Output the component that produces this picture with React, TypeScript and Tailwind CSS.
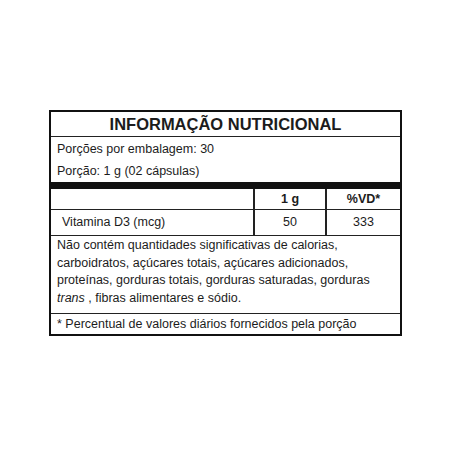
export default function App() {
  return (
    <div className="w-[450px] h-[450px] bg-white pt-[110px] pl-[49px] text-[#1c1c1c]" style={{ fontFamily: '"Liberation Sans", Arial, sans-serif' }}>
      <div className="w-[353px] border-2 border-[#111]">
        {/* Title */}
        <div className="h-[25px] border-b border-[#222] flex items-center justify-center">
          <h1 className="text-[16.5px] font-bold leading-none">INFORMAÇÃO NUTRICIONAL</h1>
        </div>

        {/* Porções */}
        <div className="h-[45px] flex flex-col justify-center pl-[6px] text-[12.5px] leading-[22px]">
          <p>Porções por embalagem: 30</p>
          <p>Porção: 1 g (02 cápsulas)</p>
        </div>

        <div className="h-[7px] bg-[#111]" />

        {/* Table */}
        <div className="grid grid-cols-[204px_72px_1fr] border-b border-[#222] text-[12.5px]">
          <div className="h-[21px] border-r-2 border-b border-[#222]" />
          <div className="h-[21px] border-r-2 border-b border-[#222] flex items-center justify-center font-bold">1 g</div>
          <div className="h-[21px] border-b border-[#222] flex items-center justify-center font-bold">%VD*</div>
          <div className="h-[25px] border-r-2 border-[#222] flex items-center pl-[11px]">Vitamina D3 (mcg)</div>
          <div className="h-[25px] border-r-2 border-[#222] flex items-center justify-center">50</div>
          <div className="h-[25px] flex items-center justify-center">333</div>
        </div>

        {/* Note */}
        <div className="h-[78px] pl-[6px] pt-[1px] text-[12.5px] leading-[17.5px] border-b border-[#222]">
          Não contém quantidades significativas de calorias, carboidratos, açúcares totais, açúcares adicionados, proteínas, gorduras totais, gorduras saturadas, gorduras <i>trans</i> , fibras alimentares e sódio.
        </div>

        {/* Footnote */}
        <div className="h-[20px] pl-[6px] flex items-center text-[12.5px]">
          * Percentual de valores diários fornecidos pela porção
        </div>
      </div>
    </div>
  );
}
